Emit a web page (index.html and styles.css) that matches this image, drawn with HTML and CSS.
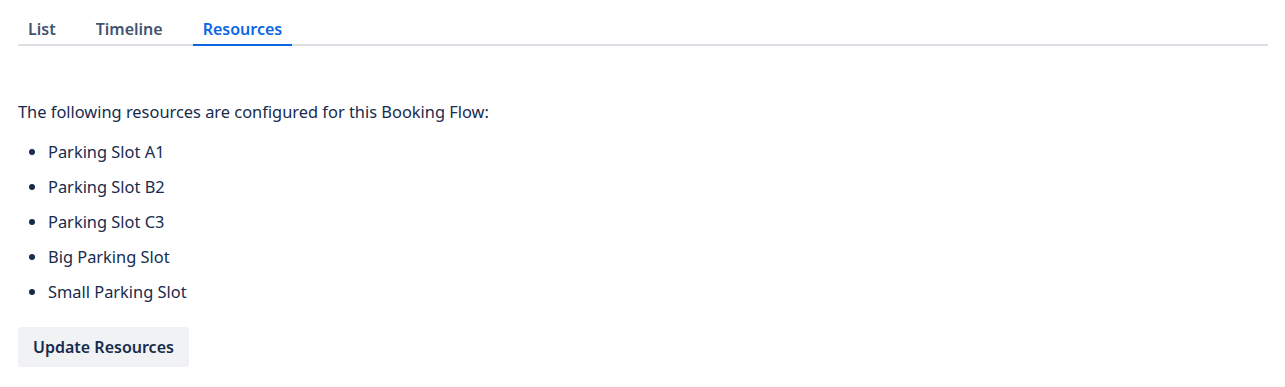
FILE: index.html
```html
<!DOCTYPE html>
<html>
<head>
<meta charset="utf-8">
<link rel="stylesheet" href="styles.css">
</head>
<body>
<div class="page">
  <nav class="tabs">
    <div class="tab">List</div>
    <div class="tab">Timeline</div>
    <div class="tab active">Resources</div>
  </nav>
  <p class="intro">The following resources are configured for this Booking Flow:</p>
  <ul class="resources">
    <li>Parking Slot A1</li>
    <li>Parking Slot B2</li>
    <li>Parking Slot C3</li>
    <li>Big Parking Slot</li>
    <li>Small Parking Slot</li>
  </ul>
  <button class="btn">Update Resources</button>
</div>
</body>
</html>
```
FILE: styles.css
```css
* { box-sizing: border-box; }
body {
  margin: 0;
  background: #fff;
  font-family: "Noto Sans", "Open Sans", sans-serif;
  color: #172b4d;
  font-size: 16.4px;
}
.page {
  padding: 16px 17px 0 18px;
}
.tabs {
  display: flex;
  gap: 20px;
  border-bottom: 2px solid #dcdfe4;
}
.tab {
  padding: 0 10px;
  height: 30px;
  line-height: 26px;
  font-size: 16px;
  font-weight: 600;
  color: #44546f;
  margin-bottom: -2px;
  border-bottom: 2px solid transparent;
}
.tab.active {
  color: #0c66e4;
  border-bottom-color: #0c66e4;
}
.intro {
  margin: 54px 0 0 0;
  line-height: 24px;
}
.resources {
  margin: 16px 0 0 0;
  padding-left: 30px;
}
.resources li {
  line-height: 24px;
  margin-bottom: 11px;
}
.btn {
  margin-top: 12px;
  font-family: inherit;
  font-size: 16px;
  font-weight: 600;
  color: #172b4d;
  background: #f1f2f4;
  border: none;
  border-radius: 3px;
  height: 40px;
  padding: 0 15px;
}
```
